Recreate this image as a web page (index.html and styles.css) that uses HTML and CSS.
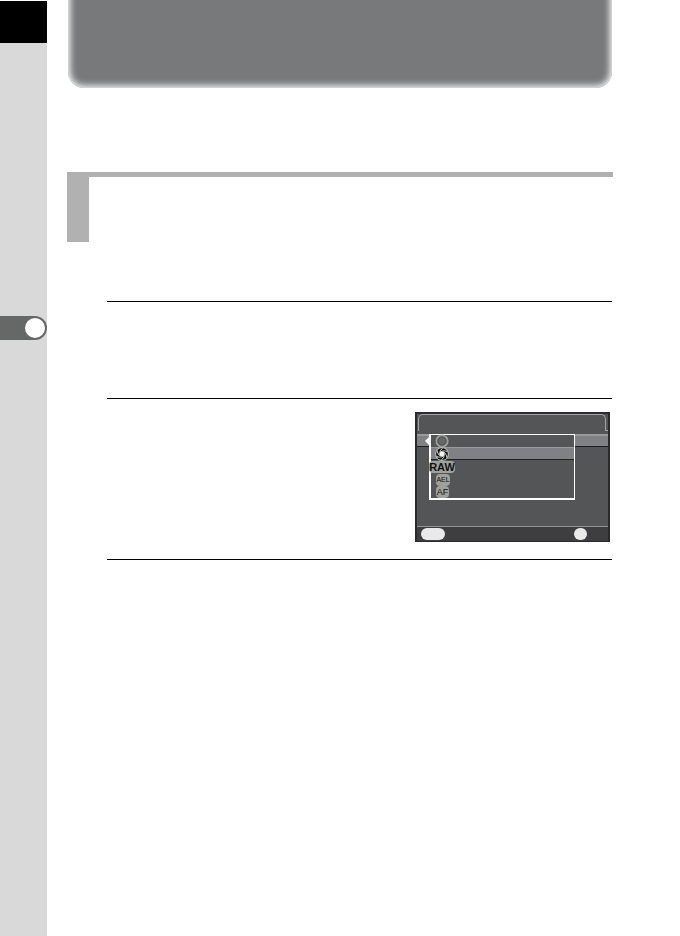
FILE: index.html
```
<!DOCTYPE html>
<html lang="en">
<head>
  <meta charset="UTF-8">
  <meta name="viewport" content="width=device-width, initial-scale=1">
  <title>Camera Manual</title>
  <link rel="stylesheet" href="styles.css">
</head>
<body>
  <aside class="sidebar">
    <div class="chapter"></div>
    <div class="marker"><span class="marker-dot"></span></div>
  </aside>

  <main class="page">
    <div class="banner-wrap"><header class="banner"></header></div>
    <div class="section-head"></div>

    <section class="step"></section>
    <section class="step step-menu">
      <!-- Camera menu screen -->
      <div class="screen">
        <div class="screen-tab"></div>
        <div class="setting">
          <svg class="arrow" viewBox="0 0 4 8"><path d="M4 0v8L0 4z" fill="#fff"/></svg>
        </div>
        <ul class="menu">
          <li>
            <button aria-label="Off">
              <svg class="icon" viewBox="0 0 14 14">
                <circle cx="7" cy="7" r="5.4" fill="#666769" stroke="#9b9c98" stroke-width="2.4"/>
                <circle cx="7" cy="7" r="4.2" fill="none" stroke="#3c3d3e" stroke-width=".8"/>
              </svg>
            </button>
          </li>
          <li class="selected">
            <button aria-label="Preview">
              <svg class="icon" viewBox="0 0 14 14">
                <circle cx="7" cy="7" r="7" fill="#b4b5b2"/>
                <circle cx="7" cy="7" r="5.9" fill="#111"/>
                <!-- gaps between the shutter blades -->
                <g fill="none" stroke="#d4d5d2" stroke-width=".9">
                  <path d="M4.6 7.5Q4.2 3.6 7.6 1"/>
                  <path d="M4.6 7.5Q4.2 3.6 7.6 1" transform="rotate(60 7 7)"/>
                  <path d="M4.6 7.5Q4.2 3.6 7.6 1" transform="rotate(120 7 7)"/>
                  <path d="M4.6 7.5Q4.2 3.6 7.6 1" transform="rotate(180 7 7)"/>
                  <path d="M4.6 7.5Q4.2 3.6 7.6 1" transform="rotate(240 7 7)"/>
                  <path d="M4.6 7.5Q4.2 3.6 7.6 1" transform="rotate(300 7 7)"/>
                </g>
                <circle cx="7" cy="7" r="2.4" fill="#f4f4f2"/>
              </svg>
            </button>
          </li>
          <li><button><span class="badge raw">RAW</span></button></li>
          <li><button><span class="badge ael">AEL</span></button></li>
          <li><button><span class="badge">AF</span></button></li>
        </ul>
        <div class="screen-foot">
          <button class="key wide" aria-label="Menu"></button>
          <button class="key" aria-label="OK"></button>
        </div>
      </div>
    </section>
    <section class="step"></section>
  </main>
</body>
</html>
```
FILE: styles.css
```
* {
  box-sizing: border-box;
}

body {
  margin: 0;
  min-height: 100vh;
  display: flex;
  background: #fff;
  font-family: "Liberation Sans", Arial, sans-serif;
}

button {
  border: none;
  padding: 0;
  background: none;
  font: inherit;
  color: inherit;
}

/* Left chapter strip */
.sidebar {
  width: 47px;
  flex: none;
  background: #d9d9d9;
  border-top: 1px solid #fff;
}

.chapter {
  height: 42px;
  background: #000;
}

.marker {
  height: 24px;
  margin-top: 273px;
  padding: 2px;
  display: flex;
  justify-content: flex-end;
  background: #666867;
  border-radius: 0 12px 12px 0;
}

.marker-dot {
  width: 20px;
  height: 20px;
  border-radius: 50%;
  background: #fff;
}

/* Page content */
.page {
  flex: 1;
  padding: 0 68px 0 20px;
}

.banner-wrap {
  overflow: hidden;
  height: 88px;
  display: flex;
}

.banner {
  flex: 1;
  margin: -20px 0 0 1px;
  border-radius: 16px;
  background: #77797a;
  box-shadow: inset 0 0 7px 2px #fff;
}

.section-head {
  height: 70px;
  margin: 84px -1px 59px 0;
  border-top: 5px solid #b1b1b1;
  border-left: 22px solid #b1b1b1;
}

.step {
  min-height: 97px;
  margin-left: 40px;
  border-top: 1px solid #000;
}

/* The screen sits at the right of its step */
.step-menu {
  display: flex;
  justify-content: flex-end;
  padding: 13px 2px 17px 0;
}

/* Menu screen */
.screen {
  position: relative;
  width: 195px;
  height: 130px;
  display: flex;
  flex-direction: column;
  background: #545557;
  border: 2px solid #2b2b2d;
  border-bottom-width: 1px;
}

.screen-tab {
  position: relative;
  height: 17px;
  margin: 0 2px 3px 1px;
  border: 1px solid #a2a3a4;
  border-bottom: none;
  border-radius: 5px 5px 0 0;
}

.screen-tab::after {
  content: "";
  position: absolute;
  right: -3px;
  bottom: 0;
  width: 3px;
  height: 1px;
  background: #a2a3a4;
}

.setting {
  height: 13px;
  padding: 1px 0 0 8px;
  background: #808184;
  border-top: 2px solid #9a9b9d;
  border-bottom: 1px solid #1f1f21;
}

.arrow {
  display: block;
  width: 4px;
  height: 8px;
}

.menu {
  position: absolute;
  left: 12px;
  top: 20px;
  width: 146px;
  margin: 0;
  padding: 0;
  list-style: none;
  background: #545557;
  border: solid #fff;
  border-width: 1px 1px 2px 2px;
}

.menu li {
  height: 13px;
}

.menu li:first-child,
.menu li:last-child {
  height: 12px;
}

.menu button {
  display: flex;
  align-items: center;
  width: 100%;
  height: 100%;
}

.menu .selected {
  background: #808184;
  box-shadow: inset 0 1px #9a9b9d, inset 0 -1px #1f1f21;
}

.icon {
  width: 14px;
  height: 14px;
  margin-left: 4px;
}

.badge {
  width: 13px;
  height: 12px;
  margin-left: 5px;
  border-radius: 4px;
  background: #a0a19d;
  color: #111;
  font-size: 9px;
  line-height: 12px;
  text-align: center;
  white-space: nowrap;
}

.raw {
  width: 26px;
  margin-left: -2px;
  font-size: 11px;
  font-weight: bold;
}

.ael {
  width: 14px;
  font-size: 7px;
}

.screen-foot {
  display: flex;
  justify-content: space-between;
  align-items: center;
  height: 15px;
  margin-top: auto;
  padding: 0 21px 0 4px;
  background: #3e3e40;
  border-top: 1px solid #929394;
}

.key {
  width: 13px;
  height: 12px;
  border-radius: 6px;
  background: #e9e9e9;
}

.wide {
  width: 24px;
}
```
